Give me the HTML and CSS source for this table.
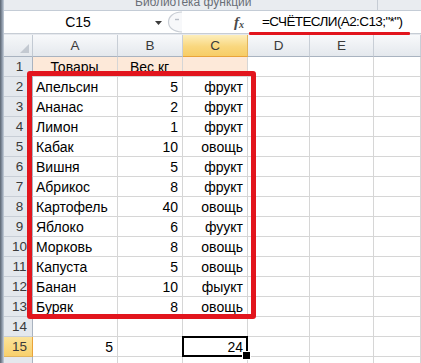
FILE: index.html
```html
<!DOCTYPE html>
<html lang="ru">
<head>
<meta charset="utf-8">
<title>СЧЁТЕСЛИ</title>
<link rel="stylesheet" href="styles.css">
</head>
<body>
<div class="window">
  <div class="frame-edge"></div>
  <div class="app">
    <div class="ribbon">
      <span class="group-label">Библиотека функций</span>
      <span class="group-sep"></span>
    </div>
    <div class="formula-bar">
      <div class="name-box">
        <span class="name">C15</span>
        <svg class="dd" width="12" height="22" viewBox="0 0 12 22"><path d="M3 10h7l-3.5 4z" fill="#3c3c3c"/></svg>
      </div>
      <svg class="grip" width="20" height="22" viewBox="0 0 20 22">
        <path d="M18 1C9.5 1 4.5 5.5 4.5 11S9.5 21 18 21" fill="#f7f8fa" stroke="#c9ced5" stroke-width="1.2"/>
        <path d="M11 8.5h4" stroke="#b9bec6" stroke-width="1.4"/>
      </svg>
      <div class="fx"><span class="f">f</span><span class="x">x</span></div>
      <div class="formula">=СЧЁТЕСЛИ(A2:C13;"*")</div>
    </div>
    <div class="sheet">
      <div class="corner"><svg class="tri" width="9" height="9" viewBox="0 0 9 9"><path d="M9 0V9H0z" fill="#c3c9d1"/></svg></div>
      <div class="ch">A</div><div class="ch">B</div><div class="ch sel">C</div><div class="ch">D</div><div class="ch">E</div><div class="ch"></div>

      <div class="rh">1</div><div class="c t">Товары</div><div class="c t">Вес кг</div><div class="c t"></div><div class="c"></div><div class="c"></div><div class="c"></div>
      <div class="rh">2</div><div class="c">Апельсин</div><div class="c r">5</div><div class="c r">фрукт</div><div class="c"></div><div class="c"></div><div class="c"></div>
      <div class="rh">3</div><div class="c">Ананас</div><div class="c r">2</div><div class="c r">фрукт</div><div class="c"></div><div class="c"></div><div class="c"></div>
      <div class="rh">4</div><div class="c">Лимон</div><div class="c r">1</div><div class="c r">фрукт</div><div class="c"></div><div class="c"></div><div class="c"></div>
      <div class="rh">5</div><div class="c">Кабак</div><div class="c r">10</div><div class="c r">овощь</div><div class="c"></div><div class="c"></div><div class="c"></div>
      <div class="rh">6</div><div class="c">Вишня</div><div class="c r">5</div><div class="c r">фрукт</div><div class="c"></div><div class="c"></div><div class="c"></div>
      <div class="rh">7</div><div class="c">Абрикос</div><div class="c r">8</div><div class="c r">фрукт</div><div class="c"></div><div class="c"></div><div class="c"></div>
      <div class="rh">8</div><div class="c">Картофель</div><div class="c r">40</div><div class="c r">овощь</div><div class="c"></div><div class="c"></div><div class="c"></div>
      <div class="rh">9</div><div class="c">Яблоко</div><div class="c r">6</div><div class="c r">фуукт</div><div class="c"></div><div class="c"></div><div class="c"></div>
      <div class="rh">10</div><div class="c">Морковь</div><div class="c r">8</div><div class="c r">овощь</div><div class="c"></div><div class="c"></div><div class="c"></div>
      <div class="rh">11</div><div class="c">Капуста</div><div class="c r">5</div><div class="c r">овощь</div><div class="c"></div><div class="c"></div><div class="c"></div>
      <div class="rh">12</div><div class="c">Банан</div><div class="c r">10</div><div class="c r">фыукт</div><div class="c"></div><div class="c"></div><div class="c"></div>
      <div class="rh">13</div><div class="c">Буряк</div><div class="c r">8</div><div class="c r">овощь</div><div class="c"></div><div class="c"></div><div class="c"></div>
      <div class="rh">14</div><div class="c"></div><div class="c"></div><div class="c"></div><div class="c"></div><div class="c"></div><div class="c"></div>
      <div class="rh sel">15</div><div class="c r">5</div><div class="c"></div><div class="c r cur">24</div><div class="c"></div><div class="c"></div><div class="c"></div>
      <div class="rh"></div><div class="c"></div><div class="c"></div><div class="c"></div><div class="c"></div><div class="c"></div><div class="c"></div>
    </div>
  </div>
  <div class="mark-range"></div>
  <div class="mark-formula"></div>
</div>
</body>
</html>
```

FILE: styles.css
```css
* {
  box-sizing: border-box;
}

html,
body {
  margin: 0;
  height: 363px;
  overflow: hidden;
  background: #fff;
}

body {
  font-family: "Liberation Sans", Arial, sans-serif;
  color: #000;
}

.window {
  position: relative;
  display: flex;
  width: 421px;
  height: 363px;
  overflow: hidden;
}

/* left window frame */
.frame-edge {
  flex: none;
  width: 4px;
  background: linear-gradient(to right, #5a6470, #8f9bab 55%, #c9d2dc);
}

.app {
  flex: 1;
  min-width: 0;
  display: flex;
  flex-direction: column;
}

/* ribbon group caption strip, scrolled so only its lower part shows */
.ribbon {
  flex: none;
  height: 11px;
  display: flex;
  overflow: hidden;
  background: #e9ecf0;
  border-bottom: 1px solid #c4ccd6;
}

.group-label {
  margin: -4px 0 0 131px;
  font-size: 12px;
  line-height: 12px;
  color: #6a6f77;
  white-space: nowrap;
}

.group-sep {
  margin-left: auto;
  margin-right: 43px;
  width: 1px;
  background: #c6ccd4;
}

/* formula bar */
.formula-bar {
  flex: none;
  height: 23px;
  display: flex;
  align-items: stretch;
  background: #fff;
  border-bottom: 1px solid #c7cdd5;
}

.name-box {
  width: 160px;
  display: flex;
  align-items: center;
}

.name {
  width: 148px;
  text-align: center;
  font-size: 14px;
}

.dd {
  flex: none;
}

.grip {
  flex: none;
}

.fx {
  margin-left: 50px;
  width: 16px;
  display: flex;
  align-items: center;
  font-family: "Liberation Serif", "Times New Roman", serif;
  font-style: italic;
  font-weight: bold;
  color: #4a4a4a;
}

.fx .f {
  font-size: 15px;
}

.fx .x {
  font-size: 10px;
  margin: 4px 0 0 0;
}

.formula {
  flex: 1;
  padding-left: 12px;
  font-size: 13.5px;
  letter-spacing: -0.6px;
  line-height: 22px;
  white-space: nowrap;
}

/* worksheet grid */
.sheet {
  flex: 1;
  padding-top: 1px;
  background: #e6e9ee;
  display: grid;
  grid-template-columns: 29px 85px 65px 65px 62px 64px 1fr;
  grid-template-rows: 22px repeat(16, 20px);
  align-content: start;
}

.corner {
  position: relative;
  background: linear-gradient(#f5f7f9, #e4e8ed);
  border-right: 1px solid #c3cad3;
  border-bottom: 1px solid #a9b3c0;
}

.tri {
  position: absolute;
  right: 3px;
  bottom: 3px;
}

.ch {
  background: linear-gradient(#f8f9fb, #e4e8ed);
  border-right: 1px solid #c8ced6;
  border-bottom: 1px solid #a9b3c0;
  text-align: center;
  font-size: 13.5px;
  line-height: 21px;
  color: #3a3a3a;
}

.ch.sel {
  background: linear-gradient(#fdeebb, #f9d77e 55%, #f7cd66);
  border-right-color: #e2b55d;
  border-bottom-color: #e9a33a;
}

.rh {
  background: #e4e8ed;
  border-right: 1px solid #a9b3c0;
  border-bottom: 1px solid #c8ced6;
  padding-left: 3px;
  text-align: center;
  font-size: 13.5px;
  line-height: 19px;
  color: #3a3a3a;
}

.rh.sel {
  background: linear-gradient(#fbe39a, #f8d06c);
  border-right-color: #e9a33a;
  border-bottom-color: #e2b55d;
}

.c {
  background: #fff;
  border-right: 1px solid #d6d6d6;
  border-bottom: 1px solid #d6d6d6;
  padding: 1px 4px 0 3px;
  font-size: 14px;
  line-height: 18px;
  white-space: nowrap;
  overflow: hidden;
}

.r {
  text-align: right;
}

.t {
  background: #fde9d9;
  text-align: center;
}

/* active cell frame and fill handle */
.cur {
  position: relative;
  overflow: visible;
}

.cur::after {
  content: "";
  position: absolute;
  left: -1px;
  top: -1px;
  right: -1px;
  bottom: -1px;
  border: 2px solid #000;
}

.cur::before {
  content: "";
  position: absolute;
  right: -4px;
  bottom: -4px;
  width: 7px;
  height: 7px;
  background: #000;
  border: 1px solid #fff;
  z-index: 1;
}

/* red highlight marks */
.mark-range {
  position: absolute;
  left: 27px;
  top: 71px;
  width: 229px;
  height: 248px;
  border: 5px solid #e2151d;
  border-radius: 3px;
}

.mark-formula {
  position: absolute;
  left: 249px;
  top: 32px;
  width: 161px;
  height: 3px;
  background: #e2151d;
  border-radius: 1px;
}
```
